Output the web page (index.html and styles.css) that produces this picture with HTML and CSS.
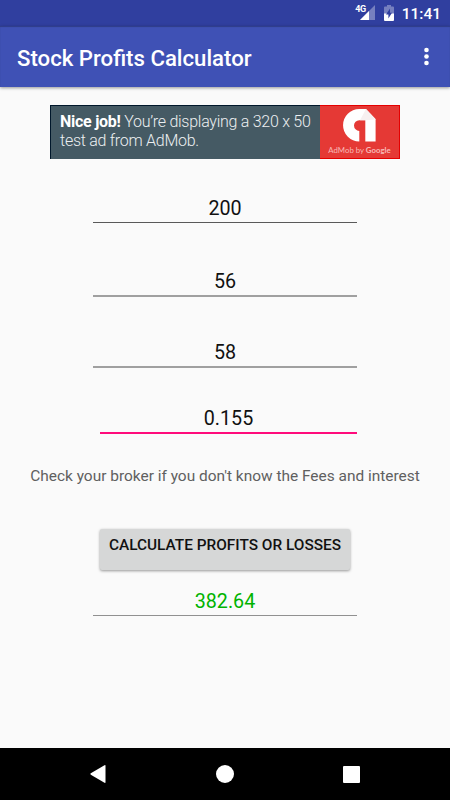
FILE: index.html
```html
<!DOCTYPE html>
<html lang="en">
<head>
    <meta charset="UTF-8">
    <meta name="viewport" content="width=device-width, initial-scale=1.0">
    <title>Stock Profits Calculator</title>
    <link rel="stylesheet" href="styles.css">
</head>
<body>

    <!-- Status bar -->
    <div class="status-bar">
        <span class="network">4G</span>
        <svg class="signal" width="15" height="15" viewBox="0 0 15 15">
            <path d="M15 0V15H0Z" fill="#7680bf"/>
            <path d="M9 6V15H0Z" fill="#fff"/>
        </svg>
        <svg class="battery" width="10" height="16" viewBox="0 0 10 16">
            <path d="M3 0H7V1.5H9Q10 1.5 10 2.5V9H0V2.5Q0 1.5 1 1.5H3Z" fill="#7680bf"/>
            <path d="M0 8.5H10V15Q10 16 9 16H1Q0 16 0 15Z" fill="#fff"/>
            <path d="M6 3.5L2 9.5H4.4V13.5L8 7.7H6Z" fill="#303f9f"/>
        </svg>
        <span class="clock">11:41</span>
    </div>

    <div class="toolbar">
        <h1>Stock Profits Calculator</h1>
        <svg class="menu-icon" width="5" height="19" viewBox="0 0 5 19">
            <circle cx="2.5" cy="3" r="2.3" fill="#fff"/>
            <circle cx="2.5" cy="9.5" r="2.3" fill="#fff"/>
            <circle cx="2.5" cy="16" r="2.3" fill="#fff"/>
        </svg>
    </div>

    <div class="content">
        <!-- Ad banner -->
        <div class="ad">
            <p class="ad-text"><b>Nice job!</b> You’re displaying a 320 x 50<br>test ad from AdMob.</p>
            <div class="ad-logo">
                <svg width="33" height="33" viewBox="0 0 33 33">
                    <path d="M16.300 0H23L32.600 10V32.500H22.300V11.300H16.300A5.300 5.300 0 0 0 16.300 21.900V32.500A16.250 16.250 0 0 1 16.300 0Z" fill="#fff"/>
                    <path d="M23 0L32.600 10.500L22.300 11.300H17Z" fill="#f7f0f0"/>
                </svg>
                <span class="ad-brand">AdMob by <b>Google</b></span>
            </div>
        </div>

        <form class="calc-form">
            <input class="field shares" type="text" value="200">
            <input class="field buy" type="text" value="56">
            <input class="field sell" type="text" value="58">
            <input class="field fees" type="text" value="0.155">
            <p class="hint">Check your broker if you don't know the Fees and interest</p>
            <button type="button" class="calc-btn">CALCULATE PROFITS OR LOSSES</button>
            <input class="field result" type="text" value="382.64" readonly>
        </form>
    </div>

    <!-- Navigation bar -->
    <div class="nav-bar">
        <svg width="16" height="18" viewBox="0 0 16 18"><path d="M0.800 8.300L14.500 0.200Q15.500 -0.200 15.500 0.800V17.200Q15.500 18.200 14.500 17.800L0.800 9.700Q0 9 0.800 8.300Z" fill="#fff"/></svg>
        <svg width="18" height="18" viewBox="0 0 18 18"><circle cx="9" cy="9" r="9" fill="#fff"/></svg>
        <svg width="17" height="17" viewBox="0 0 17 17"><rect width="17" height="17" rx="1" fill="#fff"/></svg>
    </div>

</body>
</html>
```
FILE: styles.css
```css
* {
    box-sizing: border-box;
}
body {
    font-family: Roboto, sans-serif;
    background: #fafafa;
    margin: 0;
    height: 100vh;
    display: flex;
    flex-direction: column;
    overflow: hidden;
}

.status-bar {
    height: 26px;
    flex: none;
    background: #303f9f;
    color: #fff;
    display: flex;
    justify-content: flex-end;
    align-items: flex-start;
    padding: 5px 9px 0 0;
}
.network {
    font-size: 9px;
    line-height: 9px;
    font-weight: 700;
    margin-right: -6px;
    letter-spacing: -0.5px;
}
.battery {
    margin: 0 8px 0 9px;
}
.clock {
    font-size: 15.5px;
    line-height: 19px;
    font-weight: 500;
}

.toolbar {
    height: 61px;
    flex: none;
    background: #3f51b5;
    color: #fff;
    display: flex;
    align-items: center;
    justify-content: space-between;
    padding: 0 21.5px 0 17px;
    box-shadow: inset 0 1px 1px rgba(0, 0, 0, 0.25), 0 1px 3px rgba(0, 0, 0, 0.4);
}
.toolbar h1 {
    margin: 3px 0 0;
    font-size: 22.2px;
    line-height: 26px;
    font-weight: 500;
    white-space: nowrap;
}

.content {
    flex: 1;
    padding-top: 18px;
}

/* Ad banner */
.ad {
    width: 350px;
    height: 54px;
    margin: 0 auto;
    display: flex;
    background: #455a64;
    border-top: 1px solid #00172b;
    border-left: 1px solid #00172b;
}
.ad-text {
    width: 269px;
    flex: none;
    margin: 0;
    padding: 7px 0 0 9px;
    color: #eceff1;
    font-size: 16px;
    line-height: 18.5px;
    font-weight: 300;
    letter-spacing: -0.27px;
    white-space: nowrap;
}
.ad-text b {
    color: #fff;
    font-weight: 700;
}
.ad-logo {
    width: 80px;
    margin-top: -1px;
    background: #e53935;
    border: 1px solid #e50000;
    border-left: none;
    display: flex;
    flex-direction: column;
    align-items: center;
    padding-top: 3px;
}
.ad-brand {
    font-family: Lato, sans-serif;
    font-size: 7.8px;
    line-height: 10px;
    margin-top: 3px;
    color: #f8b9b7;
    white-space: nowrap;
}

/* Calculator form */
.calc-form {
    display: flex;
    flex-direction: column;
    align-items: center;
    padding-top: 34px;
}
.field {
    width: 264px;
    height: 30px;
    padding: 1px 0 0;
    border: none;
    border-bottom: 1px solid #595959;
    background: none;
    font-family: inherit;
    font-size: 19.7px;
    color: #111;
    text-align: center;
    outline: none;
    border-radius: 0;
}
.buy {
    margin-top: 43px;
    height: 31px;
    border-bottom: 2px solid #a0a0a0;
}
.sell {
    margin-top: 41px;
    height: 30px;
    border-bottom: 2px solid #a0a0a0;
}
.fees {
    width: 257px;
    margin: 35px 0 0 7px;
    height: 31px;
    border-bottom: 2px solid #ff0b7b;
}
.hint {
    margin: 32px 0 0;
    font-size: 15.45px;
    line-height: 20px;
    color: #606060;
    white-space: nowrap;
}
.calc-btn {
    width: 250px;
    height: 41px;
    margin: 43px 0 0;
    padding: 0 0 9px;
    border: none;
    border-radius: 2px;
    background: #d6d7d7;
    box-shadow: 0 1px 3px rgba(0, 0, 0, 0.4);
    font-family: inherit;
    font-size: 15.4px;
    font-weight: 500;
    color: #111;
    white-space: nowrap;
}
.result {
    margin-top: 16px;
    color: #00b300;
    border-bottom-color: #909090;
}

/* Navigation bar */
.nav-bar {
    height: 52px;
    flex: none;
    background: #000;
    display: flex;
    align-items: center;
    justify-content: space-between;
    padding: 0 90px;
}
```
